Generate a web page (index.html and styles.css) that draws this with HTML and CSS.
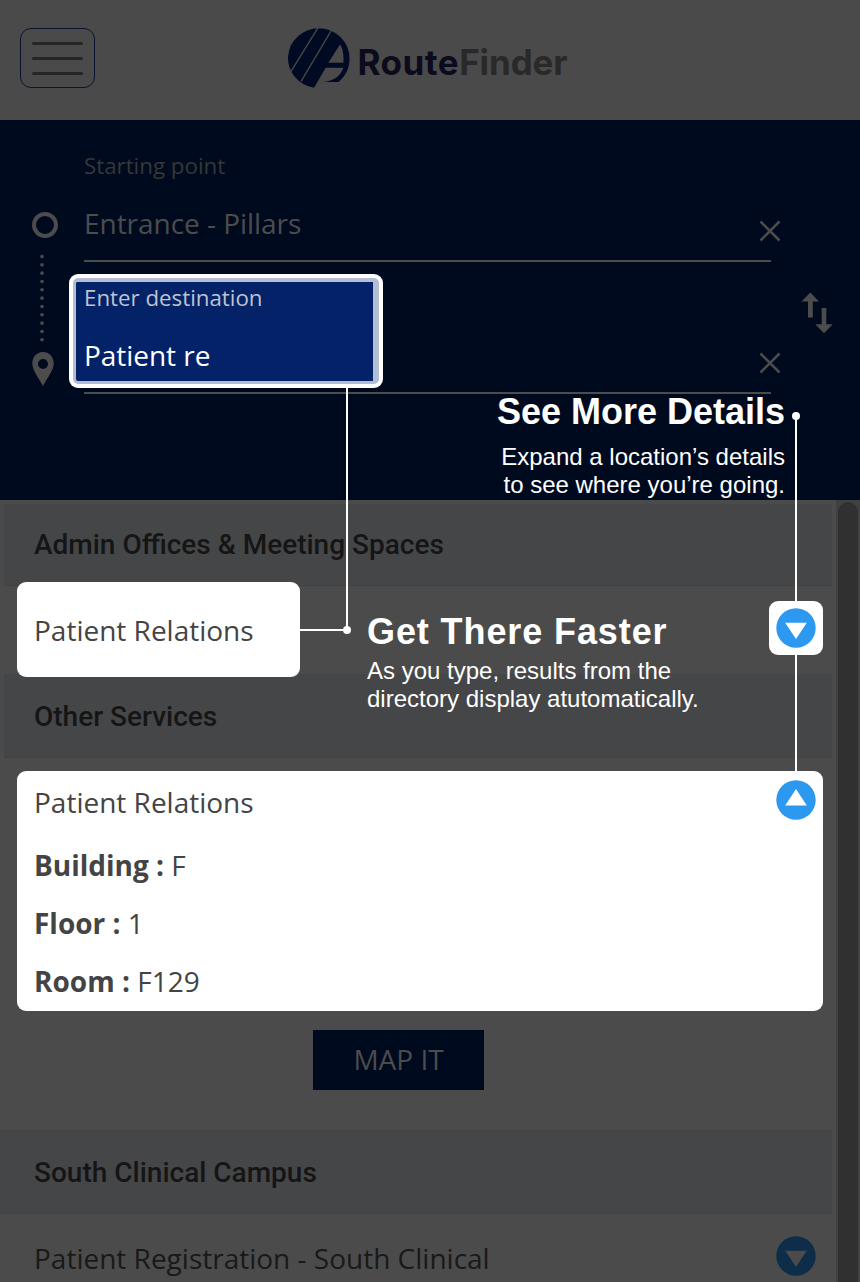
FILE: index.html
```html
<!DOCTYPE html>
<html lang="en">
<head>
<meta charset="utf-8">
<title>RouteFinder</title>
<link rel="stylesheet" href="styles.css">
</head>
<body>
<div class="page">
  <header class="header">
    <button class="menu" aria-label="Menu"><span></span><span></span><span></span></button>
    <div class="brand">
      <svg class="brand-mark" width="64" height="62" viewBox="0 0 64 62">
        <path class="navy" d="M32.500 1.200A31.200 30 0 0 1 63.500 32C63.500 42 59 49.500 52.500 55H37.500C47 54 55 49 57.300 40.700H39.700L28 60.800A31 30 0 0 1 32.500 1.200Z"/>
        <path class="cut" d="M42.300 35.700 54 17.500C57 22 58 29 57.300 35.700Z"/>
        <path class="stripe" d="M32.500 0 4 46M46.500 1.500 15 54.500"/>
      </svg>
      <div class="brand-name"><span class="brand-dark">Route</span><span class="brand-light">Finder</span></div>
    </div>
  </header>

  <section class="search">
    <svg class="route" width="84" height="264" viewBox="0 0 84 264">
      <circle cx="45" cy="95" r="11" fill="none" stroke="#4c4c4c" stroke-width="4"/>
      <path d="M42 126.500V211" stroke="#4c4c4c" stroke-width="3.600" stroke-linecap="round" stroke-dasharray="0 8.330"/>
      <path fill="#4c4c4c" fill-rule="evenodd" d="M43 222C36.500 222 32.300 227 32.300 233.500C32.300 240 38 247 43 256C48 247 53.700 240 53.700 233.500C53.700 227 49.500 222 43 222ZM43 229A5 5 0 1 1 43 239A5 5 0 1 1 43 229Z"/>
    </svg>
    <div class="fields">
      <div class="field">
        <div class="label">Starting point</div>
        <div class="value"><span class="entrance">Entrance - Pillars</span>
          <svg class="clear" width="22" height="22" viewBox="0 0 22 22"><path d="M1.500 1.500 20.500 20.500M20.500 1.500 1.500 20.500"/></svg></div>
      </div>
      <div class="field active">
        <div class="focus"></div>
        <div class="label">Enter destination</div>
        <div class="value"><span>Patient re</span>
          <svg class="clear" width="22" height="22" viewBox="0 0 22 22"><path d="M1.500 1.500 20.500 20.500M20.500 1.500 1.500 20.500"/></svg></div>
      </div>
    </div>
    <svg class="swap" width="32" height="42" viewBox="0 0 32 42"><path fill="#4c4c4c" d="M9.300.5 18 9.500H11.800V25.500H7V9.500H.5ZM20.700 16V32.300H14.300L23 41.300 31.700 32.300H25.300V16Z"/></svg>
  </section>

  <main class="results">
    <div class="list">
      <h2 class="band first">Admin Offices &amp; Meeting Spaces</h2>
      <div class="row one">
        <div class="spot"></div>
        <span class="name">Patient Relations</span>
        <span class="spot-toggle"><svg width="40" height="40" viewBox="0 0 40 40"><circle cx="20" cy="20" r="19.700" fill="#2d98f0"/><path d="M9.200 14.700H30.800L20 31Z" fill="#fff"/></svg></span>
      </div>
      <h2 class="band second">Other Services</h2>
      <article class="card">
        <div class="card-head"><span>Patient Relations</span>
          <svg width="40" height="40" viewBox="0 0 40 40"><circle cx="20" cy="20" r="19.700" fill="#2d98f0"/><path d="M9.200 25.500H30.800L20 9Z" fill="#fff"/></svg></div>
        <p><b>Building :</b> F</p>
        <p><b>Floor :</b> 1</p>
        <p><b>Room :</b> F129</p>
      </article>
      <button class="map">MAP IT</button>
      <h2 class="band third">South Clinical Campus</h2>
      <div class="row last"><span class="reg">Patient Registration - South Clinical</span>
        <svg width="40" height="40" viewBox="0 0 40 40"><circle cx="20" cy="20" r="19.700" fill="#0d2d48"/><path d="M9.200 14.700H30.800L20 31Z" fill="#4b4b4b"/></svg></div>
    </div>
    <div class="scroll"><div class="thumb"></div></div>
  </main>

  <svg class="links" width="860" height="1282" viewBox="0 0 860 1282">
    <path d="M347 388V630H300M796 416V601M796 655V771"/>
    <circle cx="347" cy="630" r="4"/><circle cx="796" cy="416" r="4"/>
  </svg>
  <aside class="note details">
    <h3>See More Details</h3>
    <p>Expand a location’s details<br>to see where you’re going.</p>
  </aside>
  <aside class="note faster">
    <h3>Get There Faster</h3>
    <p>As you type, results from the<br>directory display atutomatically.</p>
  </aside>
</div>
</body>
</html>
```
FILE: styles.css
```css
* { box-sizing: border-box; }
body { margin: 0; font-family: "Open Sans", sans-serif; font-size: 28px; background: #4b4b4b; }
h2, h3, p { margin: 0; }
button { font: inherit; }
svg { display: block; flex: none; }

.page { position: relative; width: 860px; height: 1282px; overflow: hidden; }

.header { height: 120px; padding: 27px 0 0 20px; display: flex; align-items: flex-start; background: #4a4a4a; }
.menu { width: 75px; height: 60px; margin-top: 1px; padding: 0; border: 1px solid #0b1330; border-radius: 11px; background: none; display: flex; flex-direction: column; align-items: center; justify-content: center; gap: 12px; }
.menu span { width: 51px; height: 3px; border-radius: 2px; background: #262626; }
.brand { display: flex; margin-left: 191px; }
.navy { fill: #000a22; }
.cut { fill: #4a4a4a; }
.stripe { stroke: #4a4a4a; stroke-width: 1.4; fill: none; }
.brand-name { margin: 12px 0 0 7.5px; font: 700 35px/46px Inter, sans-serif; white-space: nowrap; }
.brand-dark { color: #0b0b1d; letter-spacing: .5px; }
.brand-light { color: #292929; letter-spacing: -.1px; }

.search { height: 380px; padding-top: 10px; display: flex; align-items: flex-start; background: #000a1e; color: #4c4c4c; }
.fields { width: 687px; }
.field { position: relative; height: 132px; padding-top: 16px; border-bottom: 2px solid #4c4c4c; }
.label { position: relative; font-size: 22.3px; line-height: 40px; color: #373737; }
.value { position: relative; display: flex; justify-content: space-between; height: 74px; line-height: 74px; letter-spacing: -.04px; }
.clear { margin: 33.5px -9.5px 0 0; fill: none; stroke: #4c4c4c; stroke-width: 2.6; }
.active .label { color: #bfc3cd; }
.active .value span { color: #fff; }
.focus { position: absolute; left: -15px; top: 12px; width: 314px; height: 114px; border-radius: 9px; background: #fff; }
.focus::before { content: ""; position: absolute; inset: 4px; border: solid #b3bdd5; border-width: 4px 6px 3px 3px; border-radius: 5px; background: #032268; }
.swap { margin: 162px 0 0 30px; }

.results { height: 782px; display: flex; justify-content: space-between; overflow: hidden; }
.list { width: 832px; color: #191919; }
.band { height: 84px; padding-left: 34px; font: 500 28px/84px Roboto, sans-serif; color: #151515; background: #454648; border-bottom: 1px solid #414243; }
.first { height: 82px; line-height: 81px; margin: 4px 0 0 4px; padding-left: 30px; }
.second { margin-left: 4px; padding-left: 30px; line-height: 86px; }
.third { border-top: 1px solid #414243; line-height: 84px; }
.row { position: relative; height: 88px; padding-left: 34px; display: flex; line-height: 88px; justify-content: space-between; }
.name { position: relative; color: #444; }
.spot { position: absolute; left: 17px; top: -4px; width: 283px; height: 95px; border-radius: 9px; background: #fff; }
.spot-toggle { width: 54px; height: 54px; margin: 15px 9px 0 0; padding: 7px; border-radius: 9px; background: #fff; }
.card { width: 806px; height: 240px; margin: 13px 0 0 17px; padding-left: 17px; border-radius: 9px; background: #fff; color: #444; line-height: 58px; }
.card-head { display: flex; justify-content: space-between; height: 65px; line-height: 63px; }
.card-head svg { margin: 9px 7px 0 0; }
.map { display: block; width: 171px; height: 60px; margin: 19px 0 40px 313px; padding: 0 0 2px; border: 0; background: #000a1e; color: #4c4c4c; line-height: 58px; }
.last svg { margin: 22px 16px 0 0; }
.scroll { width: 24px; padding: 2px 2px 0; background: #414141; }
.thumb { height: 800px; border-radius: 10px; background: #303030; }

.links { position: absolute; inset: 0; fill: #fff; }
.links path { fill: none; stroke: #fff; stroke-width: 2; }
.note { position: absolute; color: #fff; font: 24px/28px "Liberation Sans", Arial, sans-serif; white-space: nowrap; }
.note h3 { font-size: 36px; line-height: 42px; }
.details { right: 75px; top: 391px; text-align: right; }
.details p { margin-top: 10px; }
.faster { left: 367px; top: 611px; }
.faster h3 { letter-spacing: .9px; }
.faster p { margin-top: 4px; }
```
